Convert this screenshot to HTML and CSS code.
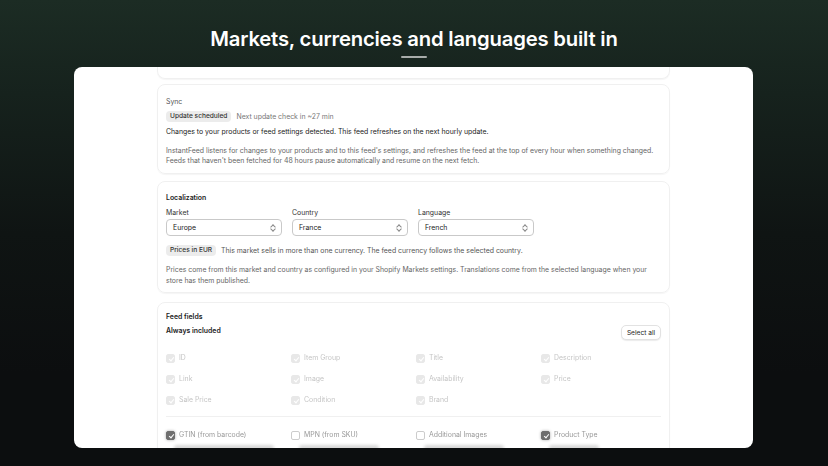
FILE: index.html
```html
<!DOCTYPE html>
<html lang="en">
  <head>
    <meta charset="UTF-8" />
    <meta name="viewport" content="width=device-width, initial-scale=1.0" />
    <title>Markets</title>
    <link rel="stylesheet" href="styles.css">
  </head>
  <body>
    <div class="stage">
      <header class="hero">
        <h1>Markets, currencies and languages built in</h1>
        <span class="bar"></span>
      </header>

      <div class="card">
        <div class="panel stub"></div>

        <section class="panel sync">
          <p class="label">Sync</p>
          <div class="row">
            <span class="badge">Update scheduled</span>
            <span class="muted">Next update check in ~27 min</span>
          </div>
          <p class="strong">Changes to your products or feed settings detected. This feed refreshes on the next hourly update.</p>
          <p class="help">
            InstantFeed listens for changes to your products and to this feed's settings, and refreshes the feed at the top of every hour when something changed.
            Feeds that haven't been fetched for 48 hours pause automatically and resume on the next fetch.
          </p>
        </section>

        <section class="panel locale">
          <p class="title">Localization</p>
          <div class="selects">
            <div class="field">
              <span>Market</span>
              <div class="select">Europe <i class="chev"></i></div>
            </div>
            <div class="field">
              <span>Country</span>
              <div class="select">France <i class="chev"></i></div>
            </div>
            <div class="field">
              <span>Language</span>
              <div class="select">French <i class="chev"></i></div>
            </div>
          </div>
          <div class="row">
            <span class="badge">Prices in EUR</span>
            <span class="muted dark">This market sells in more than one currency. The feed currency follows the selected country.</span>
          </div>
          <p class="help">
            Prices come from this market and country as configured in your Shopify Markets settings. Translations come from the selected language when your
            store has them published.
          </p>
        </section>

        <section class="panel feed">
          <p class="title">Feed fields</p>
          <div class="head">
            <p class="title">Always included</p>
            <button class="btn">Select all</button>
          </div>
          <ul class="grid locked">
            <li><i class="box on"></i>ID</li>
            <li><i class="box on"></i>Item Group</li>
            <li><i class="box on"></i>Title</li>
            <li><i class="box on"></i>Description</li>
            <li><i class="box on"></i>Link</li>
            <li><i class="box on"></i>Image</li>
            <li><i class="box on"></i>Availability</li>
            <li><i class="box on"></i>Price</li>
            <li><i class="box on"></i>Sale Price</li>
            <li><i class="box on"></i>Condition</li>
            <li><i class="box on"></i>Brand</li>
          </ul>
          <hr class="rule" />
          <ul class="grid optional">
            <li><i class="box dark"></i>GTIN (from barcode)</li>
            <li><i class="box"></i>MPN (from SKU)</li>
            <li><i class="box"></i>Additional Images</li>
            <li><i class="box dark"></i>Product Type</li>
          </ul>
          <ul class="grid ghost">
            <li><i class="smudge wide"></i></li>
            <li><i class="smudge"></i></li>
            <li><i class="smudge"></i></li>
            <li><i class="smudge short"></i></li>
          </ul>
        </section>
      </div>
    </div>
  </body>
</html>
```

FILE: styles.css
```css
* {
  margin: 0;
  padding: 0;
  box-sizing: border-box;
}
body {
  width: 828px;
  height: 466px;
  overflow: hidden;
  font-family: Inter, "Liberation Sans", sans-serif;
  background: #0c0e0f;
}
.stage {
  height: 466px;
  background: linear-gradient(to bottom, #1c2c24 0%, #16221d 20%, #0f1413 50%, #0c0e0f 80%);
}
.hero {
  display: flex;
  flex-direction: column;
  align-items: center;
  padding-top: 26px;
  height: 67px;
}
.hero h1 {
  color: #fff;
  font-size: 20.3px;
  font-weight: 600;
  letter-spacing: -0.2px;
  line-height: 25px;
}
.hero .bar {
  width: 26px;
  height: 2px;
  margin-top: 5px;
  border-radius: 2px;
  background: #a8acaa;
}
.card {
  margin: 0 75px 0 74px;
  height: 381px;
  overflow: hidden;
  background: #fff;
  border-radius: 8px;
  padding: 0 83px;
  display: flex;
  flex-direction: column;
}
.panel {
  border: 1px solid #f0f0f0;
  border-radius: 8px;
  padding: 12px 8px 8px;
  font-size: 6.9px;
  line-height: 10px;
  color: #222;
  box-shadow: 0 1px 1px rgba(0, 0, 0, 0.04);
  flex-shrink: 0;
}
.panel.stub {
  height: 12px;
  border-top: none;
  border-radius: 0 0 8px 8px;
  padding: 0;
}
.sync {
  margin-top: 5px;
  height: 90px;
}
.locale {
  margin-top: 7px;
  padding-top: 11px;
  height: 112px;
}
.feed {
  margin-top: 9px;
  padding-top: 9px;
  padding-bottom: 20px;
}
.label {
  color: #555;
  margin-bottom: 4px;
}
.title {
  font-weight: 600;
  color: #222;
}
.row {
  display: flex;
  align-items: center;
  gap: 5px;
  margin-bottom: 5px;
}
.locale .row {
  margin-top: 9px;
  margin-bottom: 8px;
}
.badge {
  background: #ececec;
  color: #333;
  font-weight: 500;
  border-radius: 4px;
  padding: 0 4px;
  line-height: 11px;
  font-size: 6.6px;
}
.muted {
  color: #777;
}
.muted.dark {
  color: #555;
}
.strong {
  color: #222;
  margin-bottom: 9px;
}
.help {
  color: #666;
}
.locale .help {
  line-height: 11px;
}
.selects {
  display: flex;
  gap: 10px;
  margin-top: 5px;
}
.field {
  display: flex;
  flex-direction: column;
  gap: 1px;
  color: #333;
}
.select {
  width: 116px;
  height: 17px;
  border: 1px solid #c9c9c9;
  border-radius: 4px;
  padding: 0 6px;
  display: flex;
  align-items: center;
  justify-content: space-between;
  color: #222;
}
.chev {
  width: 4px;
  height: 7px;
  position: relative;
}
.chev::before,
.chev::after {
  content: "";
  position: absolute;
  left: 0;
  width: 3px;
  height: 3px;
  border-left: 1px solid #888;
  border-top: 1px solid #888;
}
.chev::before {
  top: 0.5px;
  transform: rotate(45deg);
}
.chev::after {
  bottom: 0.5px;
  transform: rotate(225deg);
}
.head {
  display: flex;
  justify-content: space-between;
  align-items: flex-start;
  margin-top: 4px;
}
.btn {
  font-family: inherit;
  font-size: 6.6px;
  color: #222;
  background: #fff;
  border: 1px solid #e2e2e2;
  border-radius: 5px;
  height: 15px;
  width: 40px;
  margin-top: -1px;
  box-shadow: 0 1px 1px rgba(0, 0, 0, 0.08);
}
.grid {
  list-style: none;
  display: grid;
  grid-template-columns: repeat(4, 125px);
  row-gap: 11px;
}
.grid li {
  display: flex;
  align-items: center;
  gap: 4px;
  line-height: 10px;
}
.locked {
  margin-top: 13px;
  opacity: 0.32;
  color: #444;
}
.box {
  width: 9px;
  height: 9px;
  border-radius: 2px;
  border: 1px solid #ccc;
  background: #fff;
  position: relative;
}
.box.on {
  background: #bbb;
  border-color: #bbb;
}
.box.on::after,
.box.dark::after {
  content: "";
  position: absolute;
  left: 2.5px;
  top: 1px;
  width: 2px;
  height: 4px;
  border-right: 1px solid #fff;
  border-bottom: 1px solid #fff;
  transform: rotate(40deg);
}
.box.dark {
  background: #6e6e6e;
  border-color: #6e6e6e;
  box-shadow: 0 0 3px rgba(0, 0, 0, 0.35);
}
.rule {
  border: none;
  border-top: 1px solid #f0f0f0;
  margin: 11px 0 13px;
}
.optional {
  color: #999;
  filter: blur(0.4px);
}
.ghost {
  margin-top: 5px;
  filter: blur(1.5px);
}
.smudge {
  display: block;
  width: 80px;
  height: 6px;
  margin-left: 8px;
  border-radius: 3px;
  background: #d8d8d8;
}
.smudge.wide {
  width: 100px;
}
.smudge.short {
  width: 50px;
}
```
